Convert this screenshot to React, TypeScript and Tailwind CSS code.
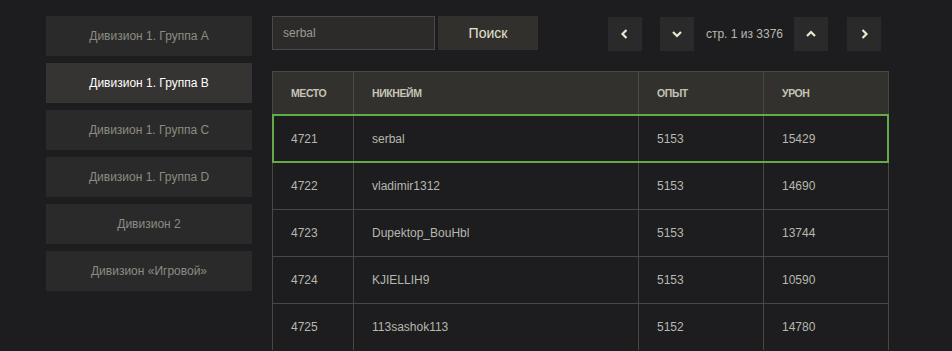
const divisions = [
  "Дивизион 1. Группа A",
  "Дивизион 1. Группа B",
  "Дивизион 1. Группа C",
  "Дивизион 1. Группа D",
  "Дивизион 2",
  "Дивизион «Игровой»",
];

const rows = [
  { place: 4721, name: "serbal", exp: 5153, dmg: 15429 },
  { place: 4722, name: "vladimir1312", exp: 5153, dmg: 14690 },
  { place: 4723, name: "Dupektop_BouHbl", exp: 5153, dmg: 13744 },
  { place: 4724, name: "KJIELLIH9", exp: 5153, dmg: 10590 },
  { place: 4725, name: "113sashok113", exp: 5152, dmg: 14780 },
];

const Chevron = ({ dir }: { dir: "left" | "right" | "up" | "down" }) => {
  const points = {
    left: "7.5,2 3.5,6 7.5,10",
    right: "4.5,2 8.5,6 4.5,10",
    up: "2,8 6,4 10,8",
    down: "2,4 6,8 10,4",
  }[dir];
  return (
    <svg width="12" height="12" viewBox="0 0 12 12">
      <polyline points={points} fill="none" stroke="#ece8d0" strokeWidth="2.2" />
    </svg>
  );
};

const PageButton = ({ dir, className = "" }: { dir: "left" | "right" | "up" | "down"; className?: string }) => (
  <button className={`w-[34px] h-[34px] bg-[#2a2a2a] flex items-center justify-center ${className}`}>
    <Chevron dir={dir} />
  </button>
);

const cols = "grid grid-cols-[81px_285px_125px_124px]";

const App = () => {
  return (
    <div className="min-h-[351px] bg-[#1d1d1f] flex items-start gap-[20px] pl-[46px] pt-[16px] font-['Liberation_Sans',Arial,sans-serif]">
      <div className="w-[206px] flex flex-col gap-[7px]">
        {divisions.map((d, i) => (
          <button
            key={d}
            className={`h-[40px] text-[12px] ${i === 1 ? "bg-[#353432] text-white" : "bg-[#2a2a2a] text-[#8c8c82]"}`}
          >
            {d}
          </button>
        ))}
      </div>

      <div className="w-[617px]">
        <div className="flex items-start justify-between pr-[8px]">
          <div className="flex items-center">
            <div className="w-[163px] h-[34px] border border-[#4a4a47] bg-[#2c2b29] flex items-center pl-[10px] text-[12px] text-[#9a9a92]">
              serbal
            </div>
            <button className="ml-[3px] w-[100px] h-[34px] bg-[#31302d] text-[14px] font-medium text-[#e6e4d2]">
              Поиск
            </button>
          </div>
          <div className="flex items-center mt-[1px]">
            <PageButton dir="left" />
            <PageButton dir="down" className="ml-[18px]" />
            <span className="ml-[12px] text-[12px] text-[#b8b8ae]">стр. 1 из 3376</span>
            <PageButton dir="up" className="ml-[11px]" />
            <PageButton dir="right" className="ml-[19px]" />
          </div>
        </div>

        <div className="mt-[20px] border border-[#484845] border-b-0">
          <div className={`${cols} h-[43px] bg-[#32312e] text-[10.5px] font-bold uppercase text-[#c4c4b6] tracking-[-0.4px]`}>
            <div className="flex items-center pl-[18px] border-r border-[#484845]">Место</div>
            <div className="flex items-center pl-[18px] border-r border-[#484845]">Никнейм</div>
            <div className="flex items-center pl-[18px] border-r border-[#484845]">Опыт</div>
            <div className="flex items-center pl-[18px]">Урон</div>
          </div>
          {rows.map((r, i) => (
            <div
              key={r.place}
              className={`${cols} h-[47px] text-[12px] text-[#b6b8ae] border-t border-[#484845] ${
                i === 0 ? "outline-2 outline-solid outline-[#62ac48] -outline-offset-1 relative" : ""
              }`}
            >
              <div className="flex items-center pl-[18px] border-r border-[#484845]">{r.place}</div>
              <div className="flex items-center pl-[18px] border-r border-[#484845]">{r.name}</div>
              <div className="flex items-center pl-[18px] border-r border-[#484845]">{r.exp}</div>
              <div className="flex items-center pl-[18px]">{r.dmg}</div>
            </div>
          ))}
        </div>
      </div>
    </div>
  );
};

export default App;
